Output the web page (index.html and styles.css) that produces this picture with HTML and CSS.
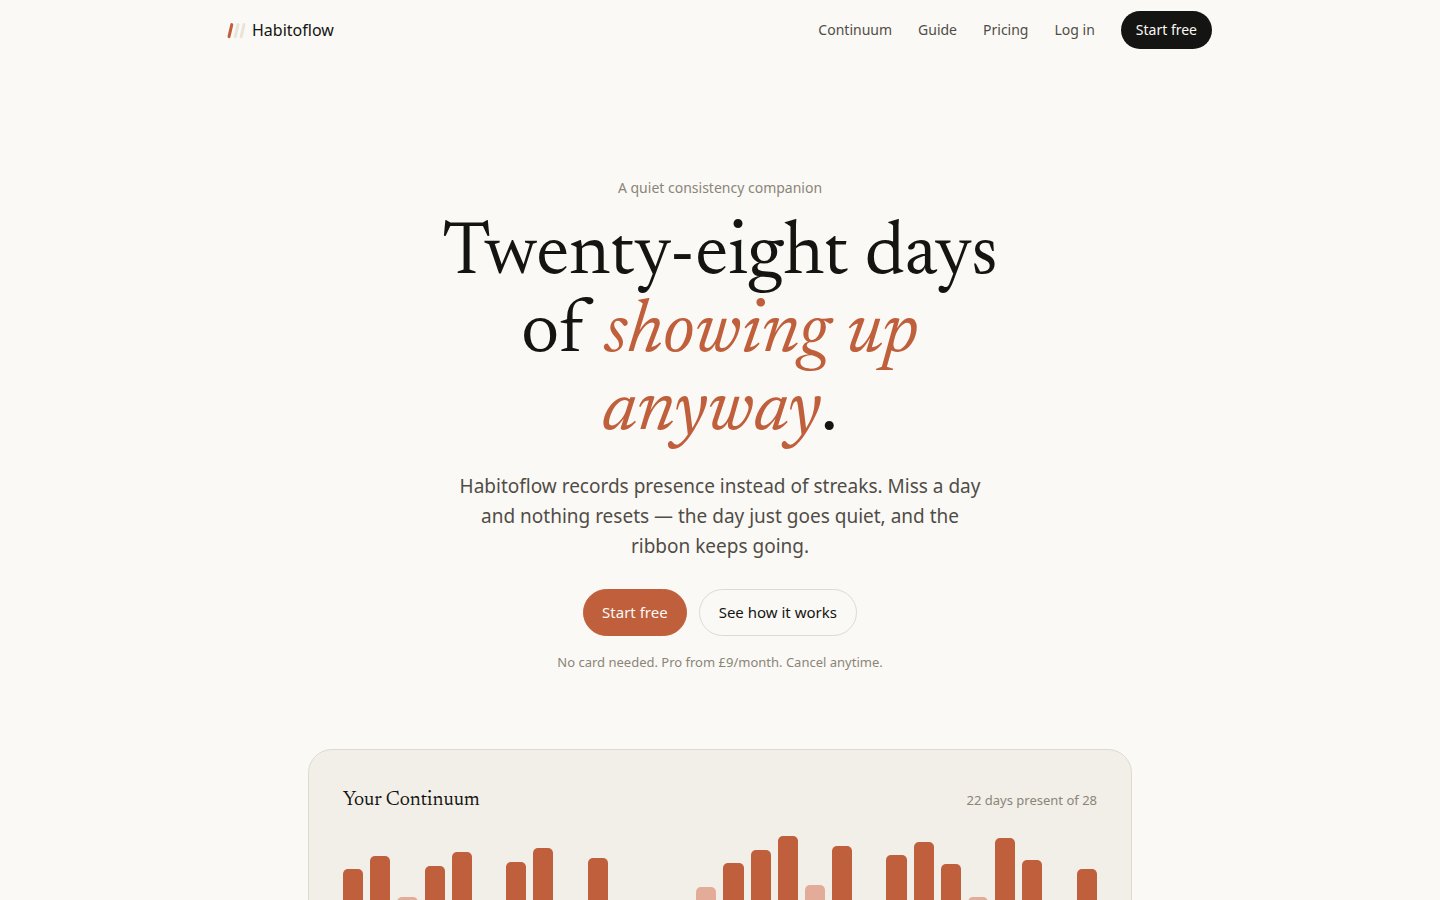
FILE: index.html
```html
<!DOCTYPE html>
<html lang="en">
<head>
<meta charset="utf-8">
<meta name="viewport" content="width=device-width, initial-scale=1">
<title>Habitoflow</title>
<link rel="stylesheet" href="styles.css">
</head>
<body>
<header class="site-header">
  <a class="brand" href="#">
    <svg class="brand-mark" viewBox="0 0 20 20" aria-hidden="true">
      <path class="mark-on" d="M2 16.6 4.8 4.6"/>
      <path class="mark-off" d="M8.2 16.6 11 4.6M14.2 16.6 17 4.6"/>
    </svg>
    <span>Habitoflow</span>
  </a>
  <nav class="site-nav">
    <a href="#continuum">Continuum</a>
    <a href="#">Guide</a>
    <a href="#">Pricing</a>
    <a href="#">Log in</a>
    <a class="button button-dark" href="#">Start free</a>
  </nav>
</header>
<main>
  <section class="hero">
    <p class="eyebrow">A quiet consistency companion</p>
    <h1>Twenty-eight days<br>of <em>showing up<br>anyway</em>.</h1>
    <p class="lead">Habitoflow records presence instead of streaks. Miss a day and nothing resets — the day just goes quiet, and the ribbon keeps going.</p>
    <div class="actions">
      <a class="button button-accent" href="#">Start free</a>
      <a class="button button-outline" href="#continuum">See how it works</a>
    </div>
    <p class="note">No card needed. Pro from £9/month. Cancel anytime.</p>
  </section>
  <section class="continuum" id="continuum">
    <div class="continuum-head">
      <h2>Your Continuum</h2>
      <p>22 days present of 28</p>
    </div>
    <ol class="ribbon">
      <li style="height:111px"></li>
      <li style="height:124px"></li>
      <li class="light" style="height:83px"></li>
      <li style="height:114px"></li>
      <li style="height:128px"></li>
      <li class="quiet"></li>
      <li style="height:118px"></li>
      <li style="height:132px"></li>
      <li class="quiet"></li>
      <li style="height:122px"></li>
      <li class="quiet"></li>
      <li class="quiet"></li>
      <li class="quiet"></li>
      <li class="light" style="height:93px"></li>
      <li style="height:117px"></li>
      <li style="height:130px"></li>
      <li style="height:144px"></li>
      <li class="light" style="height:95px"></li>
      <li style="height:134px"></li>
      <li class="quiet"></li>
      <li style="height:125px"></li>
      <li style="height:138px"></li>
      <li style="height:116px"></li>
      <li class="light" style="height:83px"></li>
      <li style="height:142px"></li>
      <li style="height:120px"></li>
      <li class="quiet"></li>
      <li style="height:111px"></li>
    </ol>
  </section>
</main>
</body>
</html>
```
FILE: styles.css
```css
:root {
  --paper: #fbf9f5;
  --panel: #f2efe8;
  --line: #dedad3;
  --ink: #141412;
  --body: #504d47;
  --muted: #8a8578;
  --accent: #c05f3c;
  --serif: "Newsreader", "Liberation Serif", serif;
}

* { box-sizing: border-box; }

body {
  margin: 0;
  background: var(--paper);
  color: var(--ink);
  font-family: "Noto Sans", sans-serif;
  font-size: 16px;
  line-height: 24px;
}

h1, h2, p, ol { margin: 0; padding: 0; }
h1, h2 { font-family: var(--serif); font-weight: 400; }
a { color: inherit; text-decoration: none; }

.site-header {
  display: flex;
  align-items: center;
  justify-content: space-between;
  max-width: 1040px;
  min-height: 60px;
  margin: 0 auto;
  padding: 0 28px;
}

.brand { display: flex; align-items: center; gap: 5px; }
.brand-mark {
  width: 20px;
  height: 20px;
  margin-left: -1px;
  fill: none;
  stroke-width: 3;
  stroke-linecap: round;
}
.mark-on { stroke: var(--accent); }
.mark-off { stroke: #e8e4da; }

.site-nav {
  display: flex;
  align-items: baseline;
  gap: 26px;
  color: var(--body);
  font-size: 14px;
}

.button {
  border-radius: 24px;
  font-size: 15px;
}
.button-dark {
  padding: 7px 15px;
  background: var(--ink);
  color: var(--paper);
  font-size: 14px;
}
.button-accent,
.button-outline { padding: 10px 19px 11px; border: 1px solid var(--line); }
.button-accent { padding: 10px 18px 11px; border-color: var(--accent); background: var(--accent); color: var(--paper); }

.hero {
  display: flex;
  flex-direction: column;
  align-items: center;
  padding: 116px 28px 75px;
  text-align: center;
}
.eyebrow { color: var(--muted); font-size: 14px; }
h1 { margin-top: 17px; font-size: 75px; line-height: 78px; }
h1 em { color: var(--accent); }
.lead {
  max-width: 540px;
  margin-top: 20px;
  color: var(--body);
  font-size: 19px;
  line-height: 30px;
}
.actions { display: flex; gap: 12px; margin-top: 28px; }
.note { margin-top: 14px; color: var(--muted); font-size: 13px; }

.continuum {
  max-width: 824px;
  margin: 0 auto 80px;
  padding: 36px 34px 34px;
  border: 1px solid var(--line);
  border-radius: 24px;
  background: var(--panel);
}
.continuum-head {
  display: flex;
  align-items: baseline;
  justify-content: space-between;
}
h2 { font-size: 20px; line-height: 28px; }
.continuum-head p { color: var(--muted); font-size: 13px; }
.ribbon {
  display: flex;
  align-items: flex-end;
  gap: 7px;
  height: 150px;
  margin-top: 16px;
  list-style: none;
}
.ribbon li { flex: 1; border-radius: 5px; background: var(--accent); }
.ribbon .light { background: #e3ac99; }
.ribbon .quiet { height: 6px; background: var(--line); }
```
